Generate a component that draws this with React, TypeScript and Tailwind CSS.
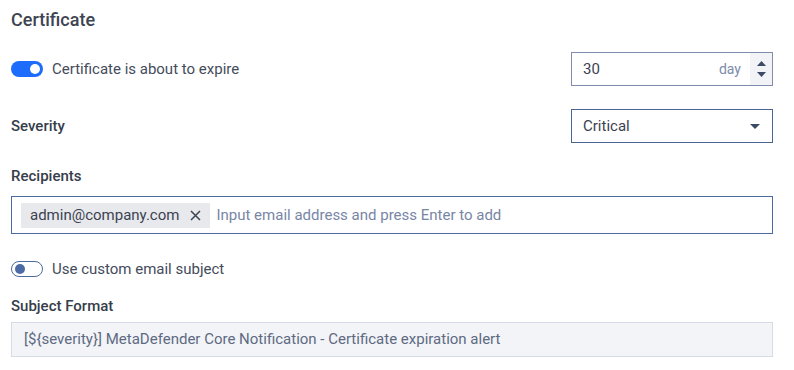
import React from "react";

export default function App() {
  return (
    <div className="w-[794px] h-[370px] bg-white text-[15px] text-[#3b4252] overflow-hidden" style={{ fontFamily: "Roboto, 'Noto Sans', sans-serif" }}>
      <div className="pl-[11px] pr-[21px]">
        <div className="pt-[6px] h-[52px] text-[18px] font-medium text-[#3d4452]">Certificate</div>

        <div className="flex items-center justify-between h-[34px]">
          <div className="flex items-center">
            <div className="w-[32px] h-[16px] rounded-full bg-[#1e6cfb] relative">
              <div className="absolute right-[3px] top-[3px] w-[10px] h-[10px] rounded-full bg-white" />
            </div>
            <span className="ml-[9px] text-[#444c5c]">Certificate is about to expire</span>
          </div>
          <div className="w-[202px] h-[34px] border border-[#7f8cab] flex items-stretch">
            <div className="flex-1 flex items-center pl-[11px] text-[#3b4252]">30</div>
            <div className="flex items-center pr-[9px] text-[14px] text-[#7d8aa8]">day</div>
            <div className="w-[22px] bg-[#f1f3f7] flex flex-col items-center justify-center gap-[6px]">
              <svg width="9" height="5" viewBox="0 0 9 5"><path d="M0 5 L4.5 0 L9 5Z" fill="#3d4a66" /></svg>
              <svg width="9" height="5" viewBox="0 0 9 5"><path d="M0 0 L4.5 5 L9 0Z" fill="#3d4a66" /></svg>
            </div>
          </div>
        </div>

        <div className="flex items-center justify-between h-[34px] mt-[23px]">
          <span className="font-medium text-[#363d4b]">Severity</span>
          <div className="w-[202px] h-[34px] border border-[#4c6594] flex items-center justify-between pl-[11px] pr-[12px]">
            <span className="text-[#3b4252]">Critical</span>
            <svg width="10" height="5" viewBox="0 0 10 5"><path d="M0 0 L5 5 L10 0Z" fill="#3d4a66" /></svg>
          </div>
        </div>

        <div className="mt-[22px] h-[26px] font-medium text-[#363d4b]">Recipients</div>
        <div className="mt-[5px] h-[38px] border border-[#4c6aa0] flex items-center pl-[9px]">
          <div className="h-[25px] bg-[#e8e9ec] flex items-center pl-[9px] pr-[9px] text-[#3b4252]">
            admin@company.com
            <svg className="ml-[11px]" width="11" height="11" viewBox="0 0 11 11"><path d="M1 1 L10 10 M10 1 L1 10" stroke="#3d4452" strokeWidth="1.5" /></svg>
          </div>
          <span className="ml-[6px] text-[#7886a6]">Input email address and press Enter to add</span>
        </div>

        <div className="mt-[26px] flex items-center h-[18px]">
          <div className="w-[32px] h-[16px] rounded-full border border-[#4d6a9e] bg-white relative">
            <div className="absolute left-[3px] top-[2px] w-[10px] h-[10px] rounded-full bg-[#4c6aa3]" />
          </div>
          <span className="ml-[9px] text-[#444c5c]">Use custom email subject</span>
        </div>

        <div className="mt-[17px] h-[27px] font-medium text-[#363d4b]">Subject Format</div>
        <div className="h-[35px] bg-[#f2f4f8] border border-[#d6dbe6] flex items-center pl-[12px] text-[#5e6a82]">
          [${"{severity}"}] MetaDefender Core Notification - Certificate expiration alert
        </div>
      </div>
    </div>
  );
}
